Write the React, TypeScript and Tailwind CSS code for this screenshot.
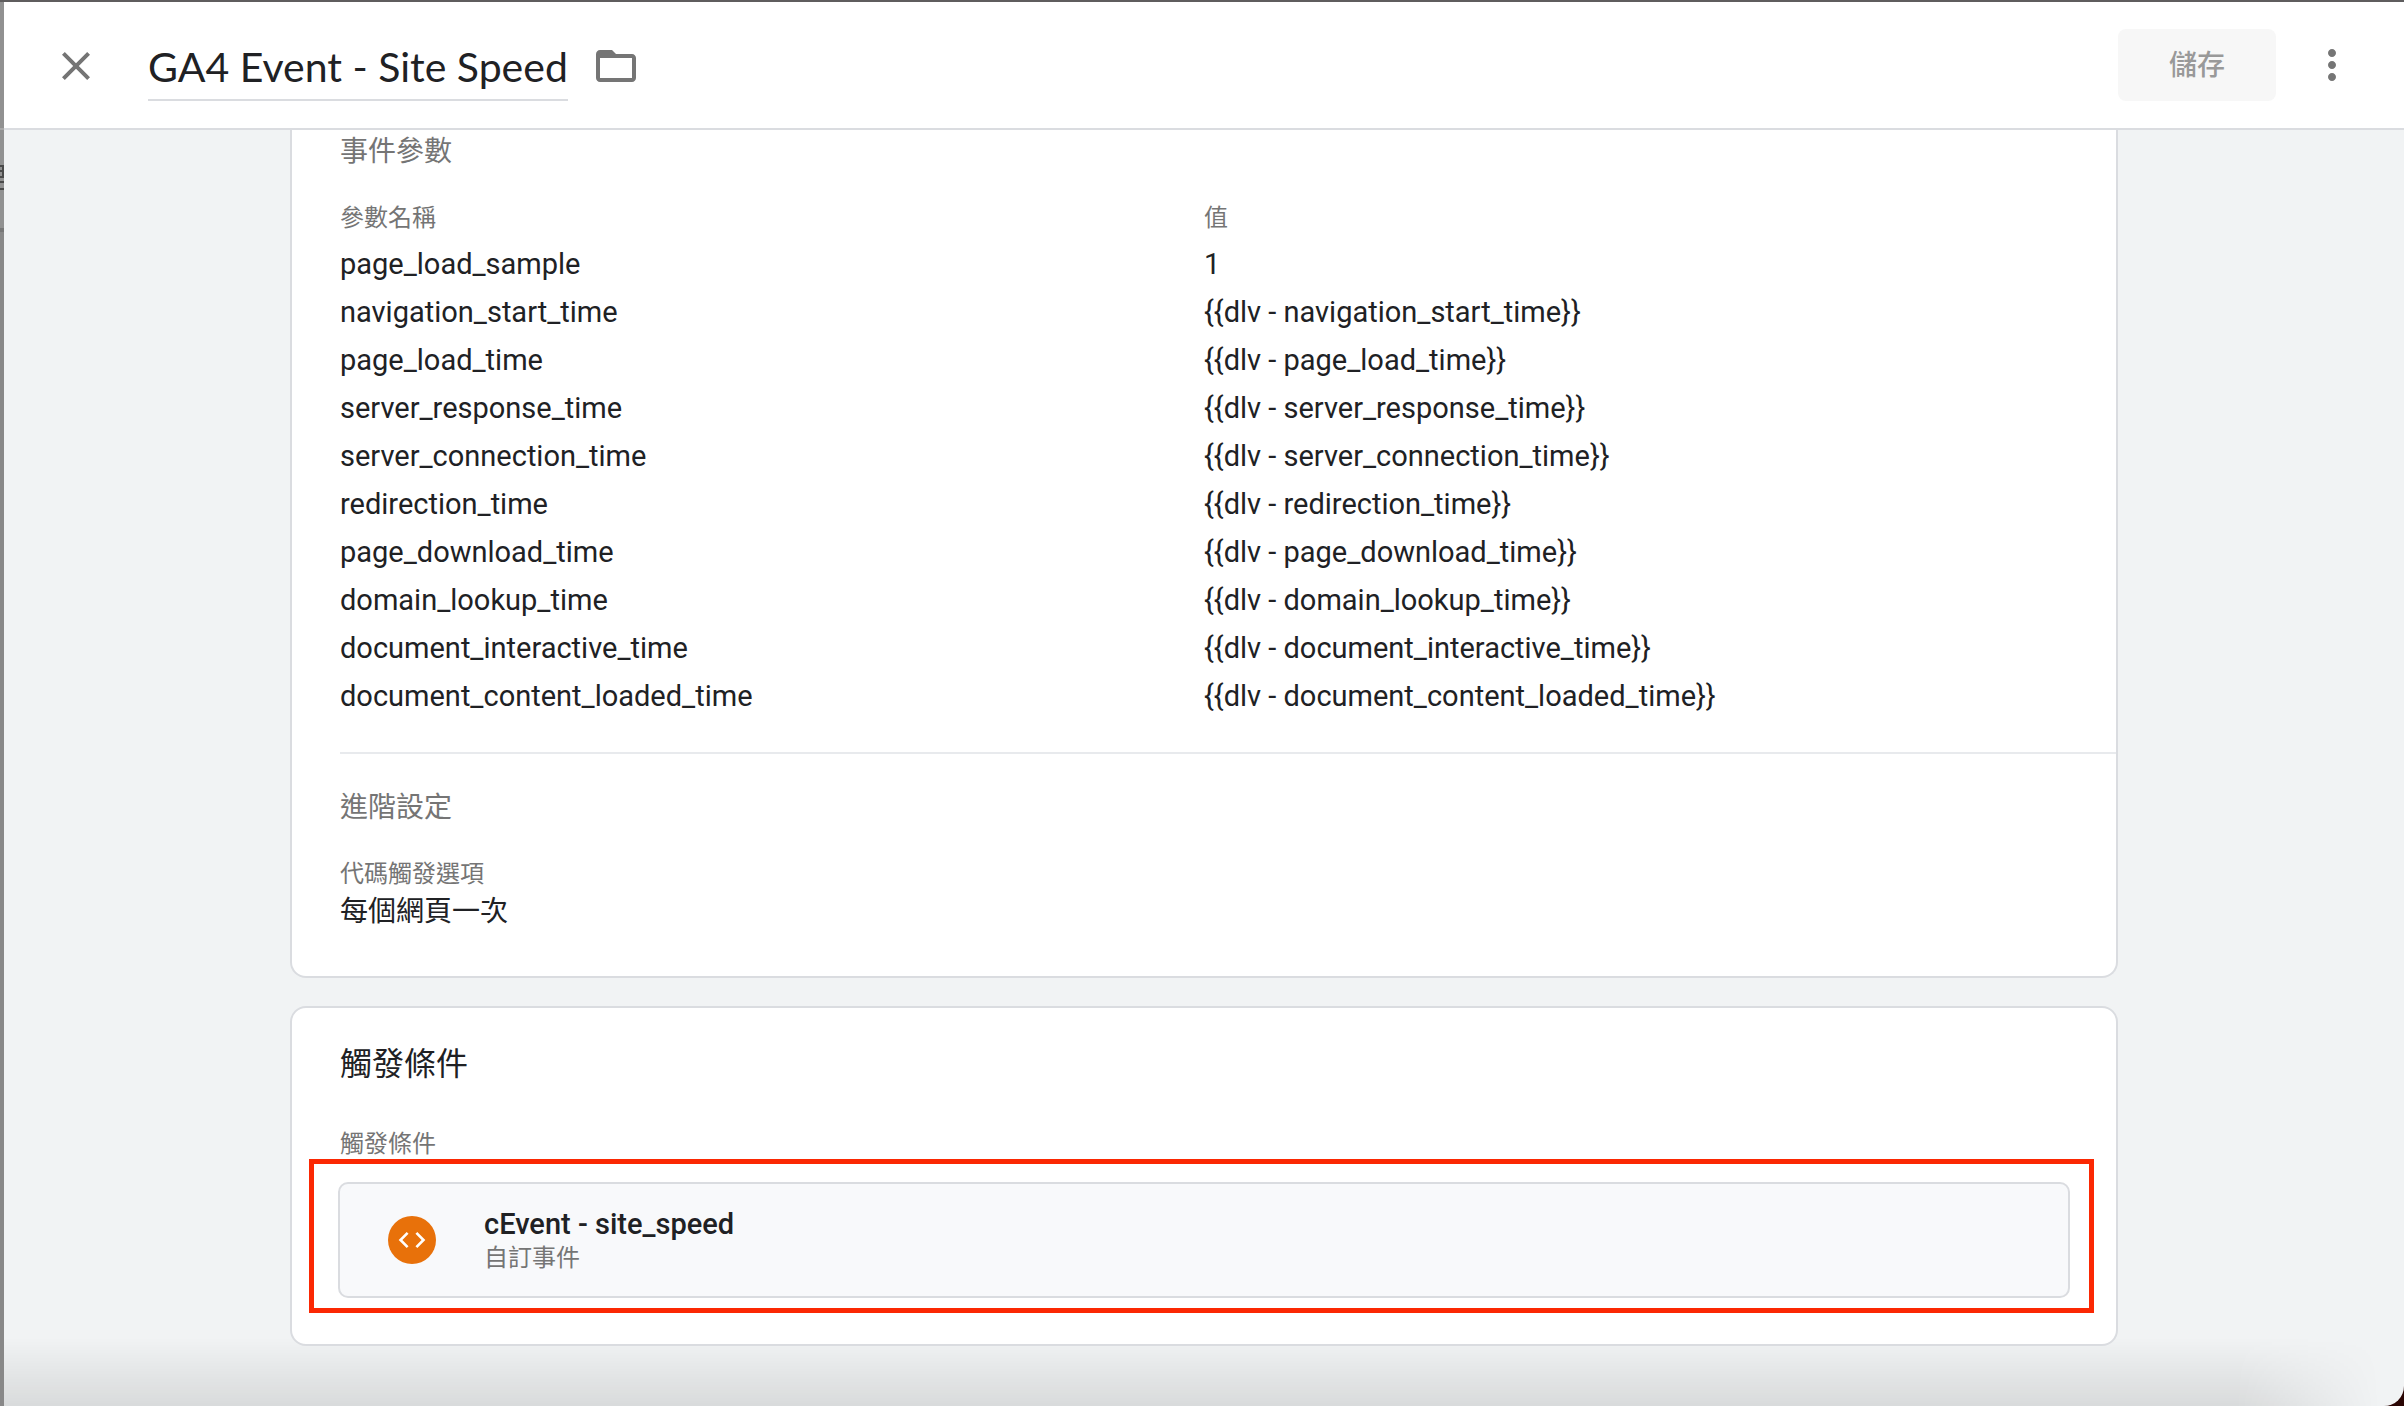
import { MdClose, MdCode, MdFolderOpen, MdMoreVert } from "react-icons/md";

const parameters = [
  { name: "page_load_sample", value: "1" },
  { name: "navigation_start_time", value: "{{dlv - navigation_start_time}}" },
  { name: "page_load_time", value: "{{dlv - page_load_time}}" },
  { name: "server_response_time", value: "{{dlv - server_response_time}}" },
  { name: "server_connection_time", value: "{{dlv - server_connection_time}}" },
  { name: "redirection_time", value: "{{dlv - redirection_time}}" },
  { name: "page_download_time", value: "{{dlv - page_download_time}}" },
  { name: "domain_lookup_time", value: "{{dlv - domain_lookup_time}}" },
  { name: "document_interactive_time", value: "{{dlv - document_interactive_time}}" },
  { name: "document_content_loaded_time", value: "{{dlv - document_content_loaded_time}}" },
];

// Dimmed edge of the page behind the sheet
function Backdrop() {
  return (
    <div className="flex flex-col w-1 bg-[#919191]">
      <svg className="w-1 h-[226px]" viewBox="0 0 4 226" aria-hidden="true">
        <rect y="126" width="4" height="2" fill="#a8a8a8" />
        <path d="M0 164h3v11H0M0 169h3" fill="none" stroke="#4a4a4a" strokeWidth="2" />
        <path d="M0 180h4M0 187h4" stroke="#4a4a4a" strokeWidth="2" />
      </svg>
      <div className="flex-1 bg-[#888888] border-t-4 border-[#777777]" />
    </div>
  );
}

function Header() {
  return (
    <header className="flex items-center justify-between h-32 px-12 bg-white border-b-2 border-[#dadce0]">
      <div className="flex items-center pt-0.5">
        <button aria-label="Close" className="text-[#757575]">
          <MdClose className="size-12" />
        </button>
        <h1 className="ml-12 pt-1 border-b-2 border-[#dadce0] font-['Lato','Noto_Sans_CJK_TC',sans-serif] text-[41px] leading-[64px]">
          GA4 Event - Site Speed
        </h1>
        <button aria-label="Folder" className="ml-6 text-[#757575]">
          <MdFolderOpen className="size-12" />
        </button>
      </div>

      <div className="flex items-center">
        <button disabled className="h-18 px-[51px] pt-0.5 rounded-lg bg-[#f7f7f7] text-[28px] font-medium text-[#999999]">
          儲存
        </button>
        <button aria-label="More" className="ml-8 text-[#757575]">
          <MdMoreVert className="size-12" />
        </button>
      </div>
    </header>
  );
}

function TagCard() {
  return (
    <section className="pl-12 pt-0.5 pb-11 bg-white border-2 border-t-0 border-[#dadce0] rounded-b-2xl">
      <h2 className="text-[28px] leading-10 text-[#757575]">事件參數</h2>

      {/* Event parameters */}
      <table className="w-full mt-7 table-fixed text-left">
        <thead>
          <tr className="text-[24px] leading-9 text-[#757575]">
            <th className="w-[864px] p-0 pb-1 font-normal">參數名稱</th>
            <th className="p-0 pb-1 font-normal">值</th>
          </tr>
        </thead>
        <tbody>
          {parameters.map((param) => (
            <tr key={param.name} className="text-[29px] leading-12">
              <td className="p-0">{param.name}</td>
              <td className="p-0">{param.value}</td>
            </tr>
          ))}
        </tbody>
      </table>

      {/* Advanced settings */}
      <div className="mt-8 pt-[34px] border-t-2 border-[#e8eaed]">
        <h2 className="text-[28px] leading-10 text-[#757575]">進階設定</h2>
        <dl className="mt-7">
          <dt className="text-[24px] leading-9 text-[#757575]">代碼觸發選項</dt>
          <dd className="text-[28px] leading-10">每個網頁一次</dd>
        </dl>
      </div>
    </section>
  );
}

function TriggerCard() {
  return (
    <section className="px-[46px] pt-8 pb-[46px] bg-white border-2 border-[#dadce0] rounded-2xl">
      <h2 className="pl-0.5 text-[32px] leading-12">觸發條件</h2>
      <h3 className="pl-0.5 mt-[38px] text-[24px] leading-9 text-[#757575]">觸發條件</h3>

      <div className="relative mt-5">
        <a href="#trigger" className="flex items-center h-[116px] pl-12 bg-[#f8f9fb] border-2 border-[#dadce0] rounded-[10px]">
          <span className="flex items-center justify-center size-12 rounded-full bg-[#e8710a] text-white">
            <MdCode className="size-8" />
          </span>
          <span className="flex flex-col ml-12">
            <span className="text-[29px] leading-9 font-medium">cEvent - site_speed</span>
            <span className="text-[24px] leading-8 text-[#757575]">自訂事件</span>
          </span>
        </a>
        {/* Highlight */}
        <div className="absolute -top-[23px] -bottom-[15px] -left-[29px] -right-6 border-5 border-[#fb2803] pointer-events-none" />
      </div>
    </section>
  );
}

export default function App() {
  return (
    <div className="flex min-h-screen bg-[#2a0503] border-t-2 border-[#5f5d5e] font-['Roboto','Noto_Sans_CJK_TC',sans-serif] text-[#202124]">
      <Backdrop />
      <div className="relative flex-1 bg-[#f1f3f4] rounded-br-[20px] overflow-hidden">
        <Header />
        <main className="relative z-10 flex flex-col gap-7 w-full max-w-[1828px] mx-auto">
          <TagCard />
          <TriggerCard />
        </main>
        <div className="absolute bottom-0 left-0 right-0 h-17 bg-linear-to-b from-transparent to-black/10 mask-r-from-93% mask-r-to-99%" />
      </div>
    </div>
  );
}
